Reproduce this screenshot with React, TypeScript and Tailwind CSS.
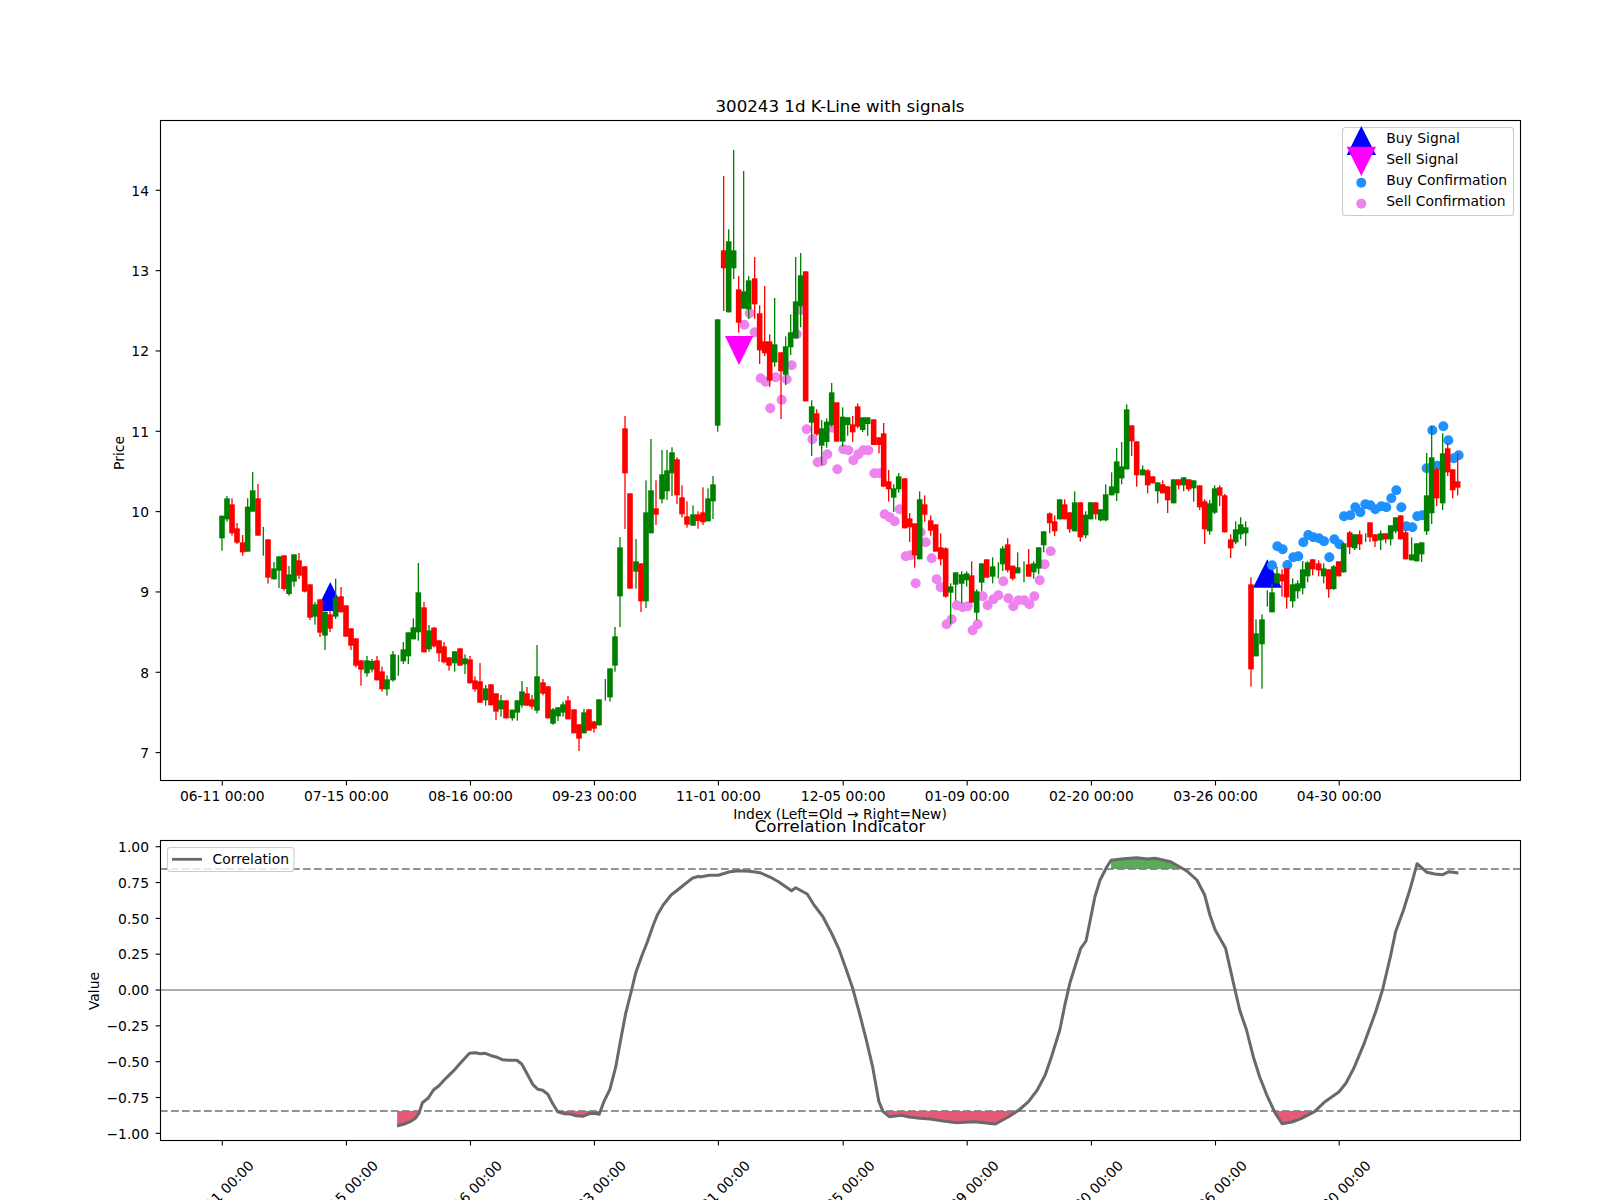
// K-line figure: candles, signals and correlation panel, traced from the chart image.
import React from 'react';

type Row = [number, 'r' | 'g', number, number, number?, number?];

const COLOR = { r: '#ff0000', g: '#008000' };

// [x, colour, wickTop, wickBottom, bodyTop, bodyBottom], in pixels of a 3x view starting at (ox, oy)
const section = (ox: number, oy: number, rows: Row[]) =>
  rows.map(([x, c, wt, wb, bt, bb]) => ({
    x: ox + x / 3,
    c,
    wt: oy + wt / 3,
    wb: oy + wb / 3,
    bt: bt === undefined ? undefined : oy + bt / 3,
    bb: bb === undefined ? undefined : oy + bb / 3,
  }));

const candles = [
  ...section(150, 420, [
    [216, 'g', 287, 392, 287, 355], [231, 'g', 228, 305, 235, 298], [246, 'r', 235, 347, 253, 340], [261, 'r', 309, 372, 325, 368],
    [278, 'r', 345, 407, 367, 397], [293, 'g', 235, 395, 260, 395], [308, 'g', 156, 275, 211, 275], [324, 'r', 192, 347, 235, 347],
    [340, 'g', 321, 407], [354, 'r', 358, 491, 358, 473], [372, 'g', 426, 478, 445, 478], [387, 'g', 409, 504, 409, 452],
    [402, 'r', 406, 512, 406, 507], [417, 'g', 438, 527, 463, 522], [432, 'g', 403, 500, 403, 485], [447, 'r', 399, 477, 421, 467],
    [464, 'r', 439, 517, 439, 515], [480, 'r', 493, 600, 493, 593], [495, 'g', 546, 614, 553, 590], [510, 'r', 538, 651, 538, 638],
    [525, 'g', 575, 690, 575, 647], [540, 'r', 571, 636, 583, 626], [557, 'g', 476, 597, 532, 590], [573, 'r', 501, 577, 529, 577],
    [588, 'r', 556, 650, 556, 650], [603, 'r', 625, 690, 625, 677], [618, 'r', 655, 742, 655, 737], [633, 'r', 721, 797, 721, 749],
    [651, 'g', 708, 770, 721, 760], [666, 'g', 717, 757, 723, 749], [681, 'r', 708, 781, 721, 781], [696, 'r', 740, 815, 754, 808],
    [711, 'g', 766, 827, 778, 808], [729, 'g', 693, 785, 703, 781], [745, 'g', 705, 767], [760, 'g', 666, 732, 688, 724],
    [775, 'g', 637, 732, 637, 709], [790, 'g', 595, 658, 622, 658], [805, 'g', 429, 662, 517, 637], [822, 'r', 546, 697, 562, 697],
    [837, 'g', 615, 695, 631, 688], [852, 'r', 621, 682, 623, 679], [867, 'r', 661, 725, 661, 700], [882, 'r', 666, 730, 679, 727],
    [897, 'r', 712, 752, 712, 737], [914, 'g', 694, 755, 694, 730], [930, 'r', 685, 737, 685, 737], [945, 'g', 703, 762, 715, 733],
    [960, 'r', 708, 790, 718, 790], [975, 'r', 769, 815, 781, 808], [990, 'r', 729, 848, 784, 848], [1007, 'g', 795, 857, 805, 841],
    [1023, 'r', 793, 856, 793, 856], [1038, 'r', 820, 900, 820, 875], [1053, 'g', 825, 890, 841, 868], [1068, 'r', 841, 895, 841, 895],
    [1087, 'g', 869, 902, 869, 895], [1102, 'g', 841, 902, 841, 878], [1116, 'g', 783, 863, 814, 856], [1131, 'r', 801, 857, 820, 857],
    [1146, 'r', 825, 868, 838, 860], [1161, 'g', 675, 880, 769, 872], [1179, 'r', 777, 826, 787, 821], [1194, 'r', 799, 895, 799, 895],
    [1209, 'g', 864, 914, 868, 911], [1224, 'g', 862, 903, 862, 889], [1239, 'g', 845, 890, 853, 878], [1254, 'r', 828, 898, 841, 898],
    [1272, 'r', 868, 940, 868, 940], [1287, 'r', 913, 993, 913, 956], [1302, 'g', 867, 940, 877, 940], [1317, 'r', 868, 932, 868, 932],
    [1332, 'r', 904, 938, 904, 926], [1347, 'g', 838, 916, 838, 916],
  ]),
  ...section(590, 420, [
    [46, 'g', 777, 842], [60, 'g', 745, 845, 745, 832], [75, 'g', 621, 755, 649, 737], [90, 'g', 351, 621, 382, 529],
    [105, 'r', -12, 327, 25, 160], [120, 'r', 220, 506, 220, 506], [138, 'g', 357, 506, 424, 455], [153, 'r', 430, 576, 430, 544],
    [168, 'g', 181, 564, 277, 544], [183, 'g', 57, 340, 211, 340], [198, 'r', 181, 315, 265, 284], [216, 'g', 90, 250, 163, 238],
    [231, 'g', 90, 240, 151, 214], [246, 'g', 82, 228, 97, 160], [261, 'r', 112, 252, 118, 226], [276, 'r', 196, 292, 232, 283],
    [291, 'r', 244, 323, 289, 314], [309, 'g', 256, 317, 283, 317], [324, 'r', 274, 326, 283, 303], [339, 'r', 202, 315, 277, 307],
    [354, 'g', 205, 304, 235, 304], [369, 'g', 168, 297, 193, 244],
  ]),
  ...section(590, 130, [
    [383, 'g', 568, 905, 568, 887], [401, 'r', 138, 543, 361, 415], [416, 'g', 298, 547, 334, 547], [431, 'g', 60, 447, 361, 415],
    [446, 'r', 438, 608, 478, 578], [461, 'g', 123, 536, 484, 536], [476, 'g', 438, 567, 451, 538], [494, 'r', 381, 566, 445, 523],
    [509, 'r', 526, 702, 550, 661], [524, 'r', 468, 678, 634, 670], [539, 'r', 613, 771, 634, 752], [554, 'g', 504, 710, 643, 697],
    [573, 'r', 667, 867, 667, 724], [587, 'g', 619, 765, 649, 734], [602, 'g', 553, 675, 607, 652], [617, 'g', 381, 625, 514, 625],
    [632, 'g', 369, 592, 436, 529], [647, 'r', 424, 814, 424, 814], [665, 'g', 811, 978, 829, 878], [680, 'r', 838, 917, 850, 913],
    [695, 'g', 870, 1005, 895, 947], [710, 'g', 865, 953, 875, 936], [725, 'g', 759, 890, 787, 885], [740, 'r', 817, 935, 817, 935],
    [758, 'g', 832, 950, 860, 935], [773, 'g', 862, 917, 862, 885], [788, 'r', 858, 936, 883, 907], [803, 'r', 820, 895, 829, 890],
    [818, 'g', 862, 906, 862, 900], [833, 'g', 862, 917, 862, 882], [851, 'r', 868, 945, 868, 945], [867, 'r', 922, 970, 922, 945],
  ]),
  ...section(880, 390, [
    [11, 'r', 99, 290, 130, 290], [26, 'r', 240, 335, 274, 298], [41, 'g', 283, 366, 295, 323], [56, 'g', 249, 308, 259, 298],
    [74, 'r', 265, 415, 265, 415], [89, 'r', 369, 456, 385, 412], [104, 'r', 400, 533, 400, 496], [119, 'g', 304, 508, 328, 508],
    [134, 'r', 316, 395, 343, 374], [152, 'r', 376, 437, 391, 422], [167, 'r', 403, 485, 403, 485], [182, 'r', 430, 526, 472, 508],
    [197, 'r', 472, 623, 475, 620], [212, 'g', 580, 703, 589, 608], [227, 'g', 547, 632, 547, 584], [245, 'g', 544, 640, 553, 581],
    [260, 'g', 544, 590, 550, 571], [275, 'r', 514, 638, 556, 638], [290, 'g', 598, 690, 604, 668], [305, 'g', 520, 604, 520, 578],
    [320, 'r', 508, 563, 508, 563], [338, 'g', 502, 580, 529, 560], [355, 'g', 517, 565], [368, 'g', 468, 543, 475, 523],
    [383, 'r', 445, 547, 463, 541], [398, 'r', 527, 571, 527, 566], [413, 'g', 487, 550, 532, 550], [432, 'g', 514, 577],
    [446, 'r', 477, 560, 523, 560], [461, 'g', 514, 566, 520, 547], [476, 'g', 472, 553, 472, 536], [491, 'g', 424, 487, 424, 466],
    [509, 'r', 367, 430, 370, 400], [524, 'r', 376, 438, 394, 424], [539, 'g', 328, 388, 328, 388], [554, 'r', 328, 388, 343, 388],
    [569, 'r', 367, 428, 367, 418], [584, 'g', 304, 424, 337, 424], [601, 'r', 337, 455, 337, 442], [617, 'g', 364, 445, 374, 436],
    [632, 'g', 337, 388, 337, 388], [647, 'r', 337, 388, 337, 373], [662, 'g', 358, 394, 358, 391], [677, 'g', 283, 394, 313, 391],
    [695, 'g', 247, 316, 289, 316], [710, 'g', 174, 333, 214, 310], [725, 'g', 156, 283, 229, 265], [740, 'g', 43, 238, 58, 238],
    [755, 'r', 106, 198, 106, 154], [770, 'r', 154, 290, 154, 256], [788, 'g', 226, 256, 238, 256], [803, 'r', 238, 310, 241, 286],
    [818, 'r', 259, 280, 259, 280], [833, 'g', 277, 340, 277, 304], [848, 'r', 271, 310, 283, 310], [863, 'r', 289, 369, 289, 331],
  ]),
  ...section(1170, 400, [
    [11, 'g', 238, 310, 238, 310], [26, 'r', 238, 268, 238, 256], [41, 'g', 232, 274, 232, 256], [56, 'r', 238, 274, 238, 268],
    [71, 'g', 241, 305, 241, 265], [89, 'r', 256, 330, 256, 322], [104, 'r', 298, 432, 304, 388], [119, 'g', 300, 404, 310, 394],
    [134, 'g', 256, 342, 265, 338], [149, 'r', 256, 318, 262, 287], [164, 'r', 282, 397, 286, 397], [182, 'r', 403, 474, 418, 445],
    [197, 'g', 364, 432, 388, 427], [212, 'g', 352, 418, 373, 403], [227, 'g', 364, 438, 382, 400], [243, 'r', 532, 860, 553, 808],
    [258, 'g', 658, 769, 700, 769], [276, 'g', 643, 866, 658, 733], [292, 'g', 571, 620], [306, 'g', 550, 637, 577, 637],
    [321, 'g', 500, 550, 520, 550], [336, 'r', 508, 590, 523, 544], [350, 'r', 505, 626, 505, 592], [368, 'g', 535, 623, 553, 604],
    [383, 'g', 541, 596, 550, 574], [398, 'g', 483, 583, 508, 565], [413, 'g', 484, 547, 487, 529], [428, 'r', 478, 526, 478, 508],
    [446, 'r', 481, 529, 490, 511], [461, 'g', 490, 550, 505, 529], [476, 'r', 508, 593, 508, 568], [491, 'g', 495, 570, 499, 567],
    [506, 'r', 484, 529, 484, 529], [521, 'g', 430, 518, 430, 517], [539, 'r', 393, 462, 397, 442], [554, 'g', 403, 450, 403, 445],
    [569, 'r', 391, 450, 403, 433], [587, 'g', 400, 426], [600, 'r', 367, 426, 367, 412], [615, 'r', 403, 441, 403, 424],
    [632, 'g', 391, 450, 400, 421], [647, 'r', 400, 430, 400, 418], [662, 'g', 376, 436, 376, 418], [677, 'g', 352, 400, 352, 394],
    [692, 'r', 346, 418, 346, 418], [707, 'r', 391, 478, 397, 478], [725, 'g', 412, 481, 463, 481], [740, 'g', 430, 484, 430, 484],
    [755, 'g', 427, 486, 427, 463], [770, 'g', 159, 405, 286, 394], [785, 'g', 78, 372, 172, 340], [800, 'r', 201, 318, 208, 295],
    [818, 'g', 100, 330, 160, 310], [833, 'r', 130, 228, 145, 217], [848, 'r', 208, 295, 208, 271], [863, 'r', 160, 286, 244, 263],
  ]),
];

const dots = (ox: number, oy: number, pts: number[][]) => pts.map(([x, y]) => [ox + x / 3, oy + y / 3]);

const buyDots = dots(1170, 400, [
  [306, 496], [322, 439], [338, 448], [352, 495], [370, 472], [385, 469], [400, 427], [415, 405], [430, 412], [447, 415], [462, 424],
  [478, 472], [493, 418], [508, 433], [522, 349], [541, 346], [556, 322], [571, 337], [586, 313], [601, 316], [616, 328], [634, 319],
  [649, 322], [664, 295], [679, 271], [694, 322], [709, 379], [727, 382], [742, 349], [757, 346], [770, 205], [787, 91], [802, 197],
  [820, 79], [835, 121], [851, 175], [866, 166],
]);

const sellDots = [
  ...dots(590, 130, [
    [479, 550], [463, 584], [494, 607], [512, 745], [527, 755], [557, 742], [590, 748], [605, 706], [575, 809], [541, 835], [620, 613],
    [632, 540], [650, 898], [667, 928], [727, 893], [712, 973], [683, 997], [697, 994], [742, 1018], [760, 958], [775, 961], [790, 991],
    [805, 973], [820, 961], [835, 961], [853, 1030], [868, 1030],
  ]),
  ...dots(880, 390, [
    [14, 373], [29, 382], [44, 394], [59, 358], [122, 427], [137, 457], [77, 499], [92, 496], [107, 580], [155, 505], [170, 568], [182, 592],
    [200, 703], [215, 688], [230, 646], [248, 652], [263, 649], [278, 721], [293, 703], [308, 619], [323, 646], [340, 628], [355, 616],
    [370, 574], [385, 625], [400, 649], [415, 631], [433, 631], [448, 643], [463, 619], [479, 571], [494, 523], [512, 484],
  ]),
];

// correlation curve, left part from one view, right part from another
const left = (x: number, y: number) => [80 + x / 2.529, 800 + y / 3];
const right = (x: number, y: number) => [700 + x / 1.912, 800 + y / 3];
const line = (pts: number[][]) => pts.map((p) => p.map((n) => n.toFixed(1)).join(',')).join(' ');

const curveLeft = [
  [802, 978], [820, 972], [835, 965], [848, 955], [857, 940], [866, 908], [880, 895], [894, 870], [908, 857], [925, 835], [945, 812],
  [965, 785], [985, 760], [1000, 758], [1012, 761], [1025, 760], [1040, 767], [1055, 772], [1068, 779], [1085, 781], [1105, 781],
  [1117, 792], [1130, 820], [1145, 853], [1158, 868], [1170, 871], [1183, 883], [1195, 910], [1208, 935], [1225, 941], [1240, 942],
  [1255, 947], [1272, 949], [1288, 941], [1300, 940], [1313, 943], [1325, 905], [1340, 868], [1355, 800], [1365, 735], [1380, 640],
  [1395, 570], [1405, 520], [1420, 470], [1435, 425], [1450, 375], [1460, 345], [1475, 315], [1495, 285], [1520, 262], [1548, 235],
  [1565, 229],
];
const curveRight = [
  [0, 231], [18, 226], [35, 226], [55, 216], [72, 212], [95, 214], [115, 218], [135, 232], [150, 245], [175, 272], [183, 263], [205, 282],
  [218, 315], [235, 350], [250, 395], [265, 445], [280, 510], [292, 565], [305, 640], [318, 720], [330, 800], [342, 905], [350, 935],
  [362, 950], [385, 946], [400, 951], [420, 955], [440, 957], [465, 963], [490, 968], [525, 965], [565, 972], [590, 950], [610, 930],
  [628, 905], [645, 870], [660, 825], [672, 770], [688, 690], [697, 620], [707, 550], [718, 495], [728, 445], [738, 423], [745, 370],
  [755, 290], [765, 240], [778, 200], [786, 181], [810, 176], [835, 173], [855, 177], [870, 175], [900, 185], [930, 212], [950, 240],
  [965, 285], [975, 345], [985, 390], [1005, 445], [1020, 550], [1032, 630], [1045, 690], [1058, 770], [1070, 830], [1085, 890],
  [1100, 940], [1113, 971], [1132, 966], [1150, 955], [1175, 935], [1195, 905], [1222, 875], [1235, 850], [1250, 805], [1270, 730],
  [1292, 635], [1305, 570], [1320, 470], [1330, 395], [1345, 330], [1358, 265], [1371, 191], [1390, 217], [1405, 222], [1420, 224],
  [1432, 215], [1450, 219],
];
const curve = [...curveLeft.map(([x, y]) => left(x, y)), ...curveRight.map(([x, y]) => right(x, y))];

const redAreas = [
  [[802, 933], [802, 978], [820, 972], [835, 965], [848, 955], [857, 940], [860, 933]].map(([x, y]) => left(x, y)),
  [[1212, 933], [1225, 941], [1240, 942], [1255, 947], [1272, 949], [1288, 941], [1300, 940], [1313, 943], [1316, 933]].map(([x, y]) => left(x, y)),
  [[352, 933], [362, 950], [385, 946], [400, 951], [420, 955], [440, 957], [465, 963], [490, 968], [525, 965], [565, 972], [590, 950], [605, 933]].map(([x, y]) => right(x, y)),
  [[1100, 933], [1113, 971], [1132, 966], [1150, 955], [1172, 933]].map(([x, y]) => right(x, y)),
];
const greenArea = [[786, 207], [786, 181], [810, 176], [835, 173], [855, 177], [870, 175], [900, 185], [925, 207]].map(([x, y]) => right(x, y));

const TICK_X = [222.3, 346.4, 470.5, 594.4, 718.4, 843.2, 967.2, 1091.4, 1215.5, 1339.2];
const TICK_LABELS = ['06-11', '07-15', '08-16', '09-23', '11-01', '12-05', '01-09', '02-20', '03-26', '04-30'];
const PRICE_TICKS = [14, 13, 12, 11, 10, 9, 8, 7];
const VALUE_TICKS = ['1.00', '0.75', '0.50', '0.25', '0.00', '−0.25', '−0.50', '−0.75', '−1.00'];

const priceY = (p: number) => 190.3 + (14 - p) * 80.33;

export default function App() {
  return (
    <div className="w-[1600px] h-[1200px] bg-white">
      <svg
        viewBox="0 0 1600 1200"
        className="block w-[1600px] h-[1200px] font-['DejaVu_Sans',sans-serif] text-[13.89px] fill-black"
      >
        {/* K-line panel */}
        <text x={840} y={112} textAnchor="middle" className="text-[16.67px]">300243 1d K-Line with signals</text>
        <polygon points="330.3,582 316,611 344.5,611" fill="#0000ff" />
        <polygon points="1267.3,559.3 1253,587.7 1281.7,587.7" fill="#0000ff" />
        {sellDots.map(([x, y], i) => <circle key={i} cx={x} cy={y} r={5} fill="#ee82ee" />)}
        {buyDots.map(([x, y], i) => <circle key={i} cx={x} cy={y} r={5} fill="#1e90ff" />)}
        <polygon points="725,336 753.3,336 739,365" fill="#ff00ff" />
        {candles.map((k, i) => (
          <g key={i} fill={COLOR[k.c]}>
            <rect x={k.x - 0.65} y={k.wt} width={1.3} height={k.wb - k.wt} />
            {k.bt !== undefined && <rect x={k.x - 2.8} y={k.bt} width={5.6} height={k.bb! - k.bt} />}
          </g>
        ))}
        <rect x={160.5} y={120.5} width={1360} height={660} fill="none" stroke="#000" strokeWidth={1.1} />
        {PRICE_TICKS.map((p) => (
          <g key={p}>
            <line x1={155.6} x2={160} y1={priceY(p)} y2={priceY(p)} stroke="#000" strokeWidth={1.1} />
            <text x={149} y={priceY(p) + 5.3} textAnchor="end">{p}</text>
          </g>
        ))}
        {TICK_X.map((x, i) => (
          <g key={x}>
            <line x1={x} x2={x} y1={781} y2={785.5} stroke="#000" strokeWidth={1.1} />
            <text x={x} y={801} textAnchor="middle">{TICK_LABELS[i]} 00:00</text>
          </g>
        ))}
        <text transform="translate(119 453) rotate(-90)" textAnchor="middle" y={5}>Price</text>
        <text x={840} y={819} textAnchor="middle">Index (Left=Old → Right=New)</text>

        {/* legend */}
        <rect x={1342.5} y={127.5} width={171} height={88} rx={3} fill="#fff" fillOpacity={0.8} stroke="#ccc" strokeWidth={1.1} />
        <polygon points="1361.3,126 1346.7,155 1376,155" fill="#0000ff" />
        <polygon points="1346.7,146.7 1376,146.7 1361.3,176" fill="#ff00ff" />
        <circle cx={1361.3} cy={182.7} r={5} fill="#1e90ff" />
        <circle cx={1361.3} cy={203.7} r={5} fill="#ee82ee" />
        <text x={1386.3} y={143}>Buy Signal</text>
        <text x={1386.3} y={164}>Sell Signal</text>
        <text x={1386.3} y={185}>Buy Confirmation</text>
        <text x={1386.3} y={206}>Sell Confirmation</text>

        {/* correlation panel */}
        <text x={840} y={831.5} textAnchor="middle" className="text-[16.67px]">Correlation Indicator</text>
        {redAreas.map((a, i) => <polygon key={i} points={line(a)} fill="#dc143c" fillOpacity={0.7} />)}
        <polygon points={line(greenArea)} fill="#008000" fillOpacity={0.65} />
        <line x1={160} x2={1520} y1={869} y2={869} stroke="#808080" strokeOpacity={0.85} strokeWidth={2.08} strokeDasharray="7.7 3.3" />
        <line x1={160} x2={1520} y1={1111} y2={1111} stroke="#808080" strokeOpacity={0.85} strokeWidth={2.08} strokeDasharray="7.7 3.3" />
        <line x1={160} x2={1520} y1={990} y2={990} stroke="#adadad" strokeWidth={2.08} />
        <polyline points={line(curve)} fill="none" stroke="#696969" strokeWidth={3} strokeLinejoin="round" />
        <rect x={160.5} y={840.5} width={1360} height={300} fill="none" stroke="#000" strokeWidth={1.1} />
        {VALUE_TICKS.map((t, i) => {
          const y = 846.7 + i * 35.83;
          return (
            <g key={t}>
              <line x1={155.6} x2={160} y1={y} y2={y} stroke="#000" strokeWidth={1.1} />
              <text x={149} y={y + 5.3} textAnchor="end">{t}</text>
            </g>
          );
        })}
        {TICK_X.map((x, i) => (
          <g key={x}>
            <line x1={x} x2={x} y1={1141} y2={1145.5} stroke="#000" strokeWidth={1.1} />
            <text transform={`translate(${x - 1} 1193) rotate(-45)`} y={5} textAnchor="middle">{TICK_LABELS[i]} 00:00</text>
          </g>
        ))}
        <text transform="translate(94 991) rotate(-90)" textAnchor="middle" y={5}>Value</text>

        {/* correlation legend */}
        <rect x={167.5} y={847.5} width={126.5} height={24} rx={3} fill="#fff" fillOpacity={0.8} stroke="#ccc" strokeWidth={1.1} />
        <line x1={172} x2={202} y1={859.3} y2={859.3} stroke="#696969" strokeWidth={2.78} />
        <text x={212.5} y={864}>Correlation</text>
      </svg>
    </div>
  );
}
